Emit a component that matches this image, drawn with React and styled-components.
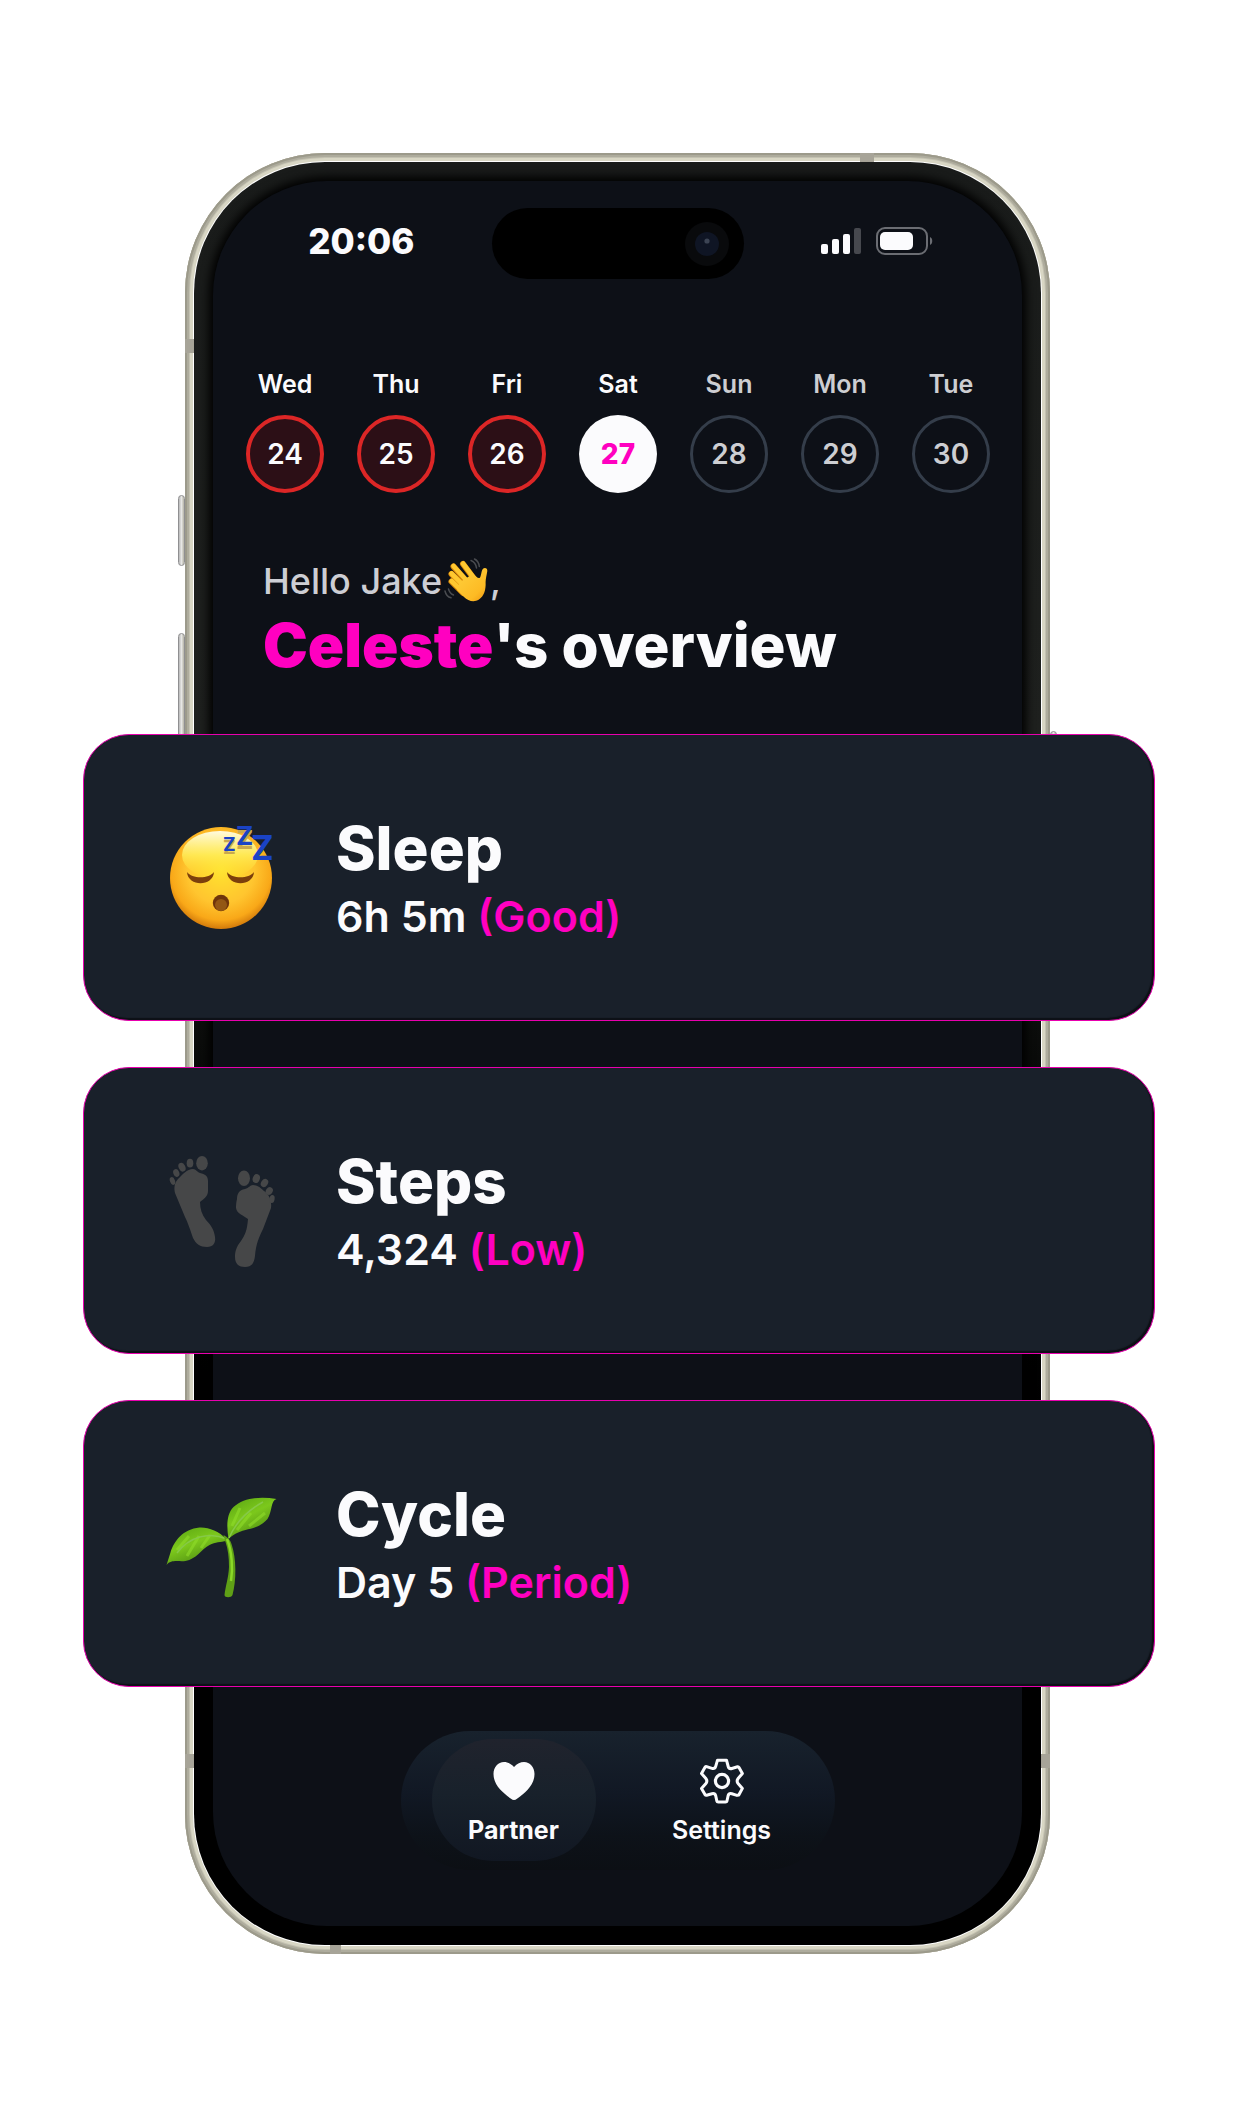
import React from 'react';
import styled, {createGlobalStyle, css} from 'styled-components';

const GlobalStyle = createGlobalStyle`
    *{
        box-sizing: border-box;
    }
    body{
        margin: 0;
        background-color: #ffffff;
        font-family: Inter, 'Liberation Sans', sans-serif;
        color: #fbfbfd;
    }
    button{
        padding: 0;
        border: 0;
        background: none;
        font: inherit;
        color: inherit;
        cursor: pointer;
    }
    h1, h2, p{
        margin: 0;
    }
    svg{
        display: block;
        flex: none;
        overflow: visible;
    }
`;

const Page = styled.main`
display: flex;
justify-content: center;
padding: 153px 19px 153px 20px;
`;

const Phone = styled.div`
position: relative;
width: 100%;
max-width: 865px;
padding: 9px;
border-radius: 140px;
background-color: #ffffff;
box-shadow:
    inset 0 0 0 2px #9c9a8b,
    inset 0 0 0 4px #aeac9d,
    inset 0 0 0 5px #c3c1b1,
    inset 0 0 0 8px #d8d6c4,
    inset 0 0 0 9px #ffffff;
`;

const Bezel = styled.div`
padding: 19px;
border-radius: 131px;
background: linear-gradient(#191b1a 0%, #1e201e 32%, #080908 52%, #000000 70%);
`;

const Screen = styled.div`
display: flex;
flex-direction: column;
padding: 27px 0 56px;
border-radius: 114px;
background-color: #0d1017;
box-shadow: 0 0 10px 4px #000000;
`;

const sides = {
    top: css`top: 0; left: 78%; width: 14px; height: 9px;`,
    leftTop: css`top: 186px; left: 0; width: 9px; height: 14px;`,
    leftBottom: css`bottom: 186px; left: 0; width: 9px; height: 14px;`,
    rightBottom: css`bottom: 186px; right: 0; width: 9px; height: 14px;`,
    bottom: css`bottom: 0; left: 145px; width: 11px; height: 9px;`,
};

const Antenna = styled.span`
position: absolute;
background-color: #a7a498;
${(props) => sides[props.$side]};
`;

const SideButton = styled.span`
position: absolute;
top: ${(props) => props.$top}px;
${(props) => props.$side}: -7px;
width: 7px;
height: ${(props) => props.$height}px;
border: 1px solid #8f8f91;
border-radius: 4px;
background: linear-gradient(to right, #b9b9ba, #e6e6e4 50%, #b4b2a6);
`;

/* status bar */
const StatusBar = styled.header`
display: grid;
grid-template-columns: 1fr 252px 1fr;
column-gap: 77px;
`;

const StatusSide = styled.div`
display: flex;
align-items: center;
gap: 15px;
height: 66px;
justify-content: ${(props) => props.$align};
`;

const Clock = styled.time`
font-size: 35px;
font-weight: 800;
line-height: 40px;
`;

const Island = styled.div`
display: flex;
align-items: center;
justify-content: flex-end;
height: 71px;
padding-right: 15px;
border-radius: 36px;
background-color: #000000;
`;

/* week */
const Week = styled.nav`
display: flex;
justify-content: flex-end;
align-items: flex-end;
gap: 33px;
margin-top: 90px;
padding-right: 32px;
overflow: hidden;
`;

const Day = styled.div`
display: flex;
flex: none;
flex-direction: column;
align-items: center;
gap: 16px;
width: 78px;
font-size: 25px;
font-weight: 600;
line-height: 30px;
color: ${(props) => props.$muted ? '#cdced2' : '#fbfbfd'};
`;

const dayTypes = {
    period: css`border: 4px solid #dc2626; background-color: #2c0f16;`,
    today: css`background-color: #fbfbfd; color: #ff00c0; font-weight: 800;`,
    future: css`border: 3px solid #343d4a;`,
};

const DayButton = styled.button`
&&{
    width: 78px;
    height: 78px;
    border-radius: 50%;
    font-size: 28px;
    ${(props) => dayTypes[props.$type]};
}
`;

/* greeting */
const Greeting = styled.section`
margin: 65px 50px 0;
`;

const Hello = styled.p`
display: flex;
align-items: center;
gap: 1px;
font-size: 36px;
font-weight: 500;
line-height: 46px;
color: #cdced4;
`;

const Title = styled.h1`
margin-top: 5px;
font-size: 60px;
font-weight: 800;
line-height: 72px;
white-space: nowrap;
`;

const Name = styled.span`
font-weight: 900;
color: #ff00c0;
`;

/* cards reach out over both edges of the phone */
const Cards = styled.section`
position: relative;
display: flex;
flex-direction: column;
gap: 46px;
margin: 53px -133px 0 -130px;
`;

const Card = styled.article`
display: flex;
align-items: center;
gap: 60px;
min-height: 287px;
padding: 40px 82px;
border: 1px solid #e800ae;
border-radius: 46px;
background-color: #19202a;
box-shadow: inset -2px -2px 1px #0d1016;
`;

const CardText = styled.div`
display: flex;
flex-direction: column;
gap: 6px;
`;

const CardTitle = styled.h2`
font-size: 60px;
font-weight: 800;
line-height: 70px;
`;

const CardValue = styled.p`
font-size: 43px;
font-weight: 600;
line-height: 54px;
`;

const Status = styled.span`
color: #ff00c0;
`;

/* tab bar */
const TabBar = styled.nav`
display: flex;
align-self: center;
gap: 44px;
margin-top: 44px;
padding: 8px 31px 9px;
border-radius: 70px;
background: linear-gradient(#18222d 0%, #111824 45%, #0d1219 75%, #0c0f14 100%);
`;

const Tab = styled.button`
&&{
    display: flex;
    flex-direction: column;
    align-items: center;
    gap: 13px;
    width: 164px;
    padding: 20px 0 17px;
    border-radius: 61px;
    background: ${(props) => props.$active ? 'linear-gradient(#20232d 0%, #18212b 45%, #111722 100%)' : 'none'};
    font-size: 25px;
    font-weight: ${(props) => props.$active ? 700 : 600};
    line-height: 28px;
}
`;

function Camera() {
    return (
        <svg width="44" height="44" viewBox="0 0 44 44">
            <circle cx="22" cy="22" r="22" fill="#090a0c" />
            <circle cx="22" cy="22" r="12" fill="#0f1524" />
            <circle cx="22" cy="19" r="2.6" fill="#3c4454" />
        </svg>
    );
}

function Signal() {
    return (
        <svg width="40" height="26" viewBox="0 0 40 26" fill="#fbfbfd">
            <rect x="0" y="16" width="7" height="10" rx="2" />
            <rect x="11" y="11" width="7" height="15" rx="2" />
            <rect x="22" y="6" width="7" height="20" rx="2" />
            <rect x="33" y="0" width="7" height="26" rx="2" fill="#46484e" />
        </svg>
    );
}

function Battery() {
    return (
        <svg width="58" height="28" viewBox="0 0 58 28">
            <rect x="1" y="1" width="50" height="26" rx="8" fill="none" stroke="#6b6d73" strokeWidth="2" />
            <rect x="4" y="5" width="33" height="18" rx="5" fill="#fbfbfd" />
            <path d="M54 10c3 1.200 3 6.800 0 8z" fill="#6b6d73" />
        </svg>
    );
}

function Wave() {
    return (
        <svg width="46" height="46" viewBox="0 0 46 46" fill="none" strokeLinecap="round">
            <defs>
                <linearGradient id="hand" x1="0" y1="0" x2="46" y2="46" gradientUnits="userSpaceOnUse">
                    <stop offset="0.3" stopColor="#ffcf3c" />
                    <stop offset="0.75" stopColor="#fdbb24" />
                    <stop offset="1" stopColor="#e88a0c" />
                </linearGradient>
            </defs>
            <path d="M10.500 8.500 24 24M20 6l12 16M8.500 16l13 14M8.500 23.500 20 35" stroke="#d88508" strokeWidth="6" />
            <path d="M10.500 8 24 23M20 5.500l12 16M8.500 15.500l13 13M8.500 23 20 34" stroke="#ffc830" strokeWidth="4.600" />
            <path d="M17 24 30 16c3 2 4.500 4.500 6.500 4 1.800-.600 1.500-7 3.500-9.200 1.800-1.800 4.600-.700 4.300 2.200-.500 4-1.600 7-1.700 11 .400 8-1.600 14-6.600 17.500-5 3.200-11 1.500-15-2.500l-7-7z" fill="url(#hand)" />
            <path d="M28 2.500c3 1 5 4 5.500 7.500M31.500 1c3 1.500 4.500 4.500 4.800 7.500M5.500 31c.800 3 2.500 5 5 6M2 33c.800 3.500 2.800 6 6 6.800" stroke="#4a4c50" strokeWidth="1.500" />
        </svg>
    );
}

function SleepIcon() {
    return (
        <svg width="110" height="110" viewBox="0 0 110 110">
            <defs>
                <radialGradient id="face" cx="0.5" cy="0.42" r="0.6">
                    <stop offset="0" stopColor="#ffe32f" />
                    <stop offset="0.55" stopColor="#ffc52f" />
                    <stop offset="0.82" stopColor="#f9a818" />
                    <stop offset="1" stopColor="#c96f08" />
                </radialGradient>
                <linearGradient id="shine" x1="0" y1="0" x2="0" y2="1">
                    <stop offset="0" stopColor="#fffbe0" />
                    <stop offset="0.5" stopColor="#fff05c" stopOpacity="0.8" />
                    <stop offset="1" stopColor="#ffe32f" stopOpacity="0" />
                </linearGradient>
            </defs>
            <circle cx="55" cy="55" r="51" fill="url(#face)" />
            <ellipse cx="54" cy="32" rx="38" ry="24" fill="url(#shine)" />
            <path d="M21 49c5 7 22 7 27 0-1 15-26 15-27 0zM61 49c5 7 22 7 27 0-1 15-26 15-27 0z" fill="#7c3f0c" />
            <circle cx="55" cy="80" r="8.200" fill="#6f350b" />
            <circle cx="55" cy="82" r="6" fill="#935714" />
            <g fontFamily="Inter, sans-serif" fontWeight="700" fill="#c9a94e">
                <text x="57" y="31" fontSize="19">Z</text>
                <text x="70" y="26" fontSize="26">Z</text>
            </g>
            <g fontFamily="Inter, sans-serif" fontWeight="700" fill="#1a43c6">
                <text x="57" y="28" fontSize="19">Z</text>
                <text x="70" y="22" fontSize="26">Z</text>
                <text x="85" y="37" fontSize="34">Z</text>
            </g>
        </svg>
    );
}

function StepsIcon() {
    return (
        <svg width="110" height="110" viewBox="0 0 110 110" fill="#464748">
            <path d="M27 13c3 0 4 3 7 4 5 1 8 3 8 8v10c0 5-4 8-8 11 0 7 2 13 6 18 5 5 8 10 9 17 1 6-2 10-8 10-7 0-11-3-14-9-3-9-5-15-8-21L9 37c-1-5-1-9 3-14 4-4 9-10 15-10z" />
            <ellipse cx="36" cy="7.200" rx="5.800" ry="7.200" />
            <ellipse cx="24" cy="7.200" rx="3.300" ry="4.400" />
            <ellipse cx="16" cy="11.200" rx="3.300" ry="4.600" transform="rotate(-25 16 11.200)" />
            <ellipse cx="10.300" cy="17" rx="3" ry="4" transform="rotate(-20 10.300 17)" />
            <ellipse cx="6.500" cy="25" rx="2.500" ry="4" transform="rotate(-20 6.500 25)" />
            <path d="M87 29c-3 0-4 3-8 4-6 1-8 5-8 10-1 4-1 7-1 9 1 6 7 7 12 11-1 12-3 16-7 22-5 6-6 11-6 16 0 7 4 10 10 10 7 0 9-4 10-11 1-12 4-19 8-27l8-21c1-7-2-14-7-17-3-3-7-6-11-6z" />
            <ellipse cx="78" cy="22.200" rx="6" ry="7.700" />
            <ellipse cx="90.300" cy="22.500" rx="3.500" ry="4.600" transform="rotate(20 90.300 22.500)" />
            <ellipse cx="98.500" cy="27" rx="3.300" ry="4.400" transform="rotate(35 98.500 27)" />
            <ellipse cx="103.300" cy="35" rx="3.300" ry="4" transform="rotate(35 103.300 35)" />
            <ellipse cx="106" cy="43" rx="2.600" ry="4" transform="rotate(10 106 43)" />
        </svg>
    );
}

function CycleIcon() {
    return (
        <svg width="110" height="110" viewBox="1 1 110 110" fill="none">
            <defs>
                <linearGradient id="leaf" x1="0" y1="0" x2="0.6" y2="1">
                    <stop offset="0" stopColor="#58a312" />
                    <stop offset="0.5" stopColor="#7cc81c" />
                    <stop offset="1" stopColor="#4c8a12" />
                </linearGradient>
            </defs>
            <path d="M63.500 51c-2-13-2-25 5-32 10-9 26-11 43-8-6 2-4 12-9 20-7 8-15 9-22 11-8 2-13 5-17 9z" fill="url(#leaf)" />
            <path d="M61.500 51c-8-8-18-12-27-11.500C18 41 9 53 5.500 64.500L1.500 77c5-6 12-3 19-4 11-2 15-11 24-16 6-3 11-3 17-4z" fill="url(#leaf)" />
            <path d="M67 38l8-18M72 42l14-17M84 38l16-13M12 62l12-14M22 68l12-20M36 60l9-13" stroke="#8fdc2a" strokeWidth="3" opacity="0.6" />
            <path d="M64 50c6-14 16-26 34-36M62 51c-18-8-38-2-50 14" stroke="#86c948" strokeWidth="1.500" />
            <path d="M58.500 47c4 2 7 5 8 9 5 14 5 37 1 51-1 3-8 3-8 0 1-9 4-17 4.500-28 0-10-1-18-3.500-25z" fill="#5fa016" />
            <path d="M62 51c5 12 6 30 4 42" stroke="#8ad827" strokeWidth="2.500" />
        </svg>
    );
}

function Heart() {
    return (
        <svg width="42" height="44" viewBox="0 0 42 44" fill="#fbfbfd">
            <path d="M21 8C18 4.500 14.500 3 11 3 5 3 .500 8 .500 15c0 11 9 18.500 17.500 24.800 2 1.600 4 1.600 6 0C32.500 33.500 41.500 26 41.500 15 41.500 8 37 3 31 3c-3.500 0-7 1.500-10 5z" />
        </svg>
    );
}

function Gear() {
    return (
        <svg width="44" height="44" viewBox="0 0 44 44" fill="none" stroke="#fbfbfd" strokeWidth="3" strokeLinejoin="round">
            <path d="M17.500 1.200h9l1.700 6.300q.800 2.700 3.700 2l5.600-1.700q1-.200 1.500.700l3.400 6-4.100 4.700q-2.300 2.800 0 5.600l4.100 4.600-3.600 6.600-1.800.400-5.200-1.700q-2.900-.700-3.700 2l-1.200 5.500q-.200.900-1.400.900h-7.200q-1.200 0-1.400-.900l-1.200-5.500q-.800-2.700-3.700-2l-5.400 1.600q-1 .200-1.600-.700l-3.500-6.100 4.200-4.700q2.300-2.800 0-5.600l-4.200-4.700 3.500-6.200q.600-.900 1.600-.700l5.400 1.800q2.900.700 3.700-2z" />
            <circle cx="22" cy="22" r="6.600" strokeWidth="3.200" />
        </svg>
    );
}

const days = [
    {name: 'Wed', date: 24, type: 'period'},
    {name: 'Thu', date: 25, type: 'period'},
    {name: 'Fri', date: 26, type: 'period'},
    {name: 'Sat', date: 27, type: 'today'},
    {name: 'Sun', date: 28, type: 'future'},
    {name: 'Mon', date: 29, type: 'future'},
    {name: 'Tue', date: 30, type: 'future'},
];

const cards = [
    {title: 'Sleep', value: '6h 5m', status: 'Good', icon: <SleepIcon />},
    {title: 'Steps', value: '4,324', status: 'Low', icon: <StepsIcon />},
    {title: 'Cycle', value: 'Day 5', status: 'Period', icon: <CycleIcon />},
];

function App() {
    return (
        <>
            <GlobalStyle />
            <Page>
                <Phone>
                    <SideButton $side="left" $top={342} $height={71} />
                    <SideButton $side="left" $top={480} $height={150} />
                    <SideButton $side="right" $top={578} $height={200} />
                    <Bezel>
                        <Screen>
                            <StatusBar>
                                <StatusSide $align="flex-end">
                                    <Clock>20:06</Clock>
                                </StatusSide>
                                <Island>
                                    <Camera />
                                </Island>
                                <StatusSide $align="flex-start">
                                    <Signal />
                                    <Battery />
                                </StatusSide>
                            </StatusBar>
                            <Week aria-label="Week">
                                {/* the previous day peeks in at the left edge */}
                                <Day>
                                    <DayButton $type="period" aria-label="Previous day" />
                                </Day>
                                {days.map((day) => (
                                    <Day key={day.date} $muted={day.type === 'future'}>
                                        <span>{day.name}</span>
                                        <DayButton $type={day.type}>{day.date}</DayButton>
                                    </Day>
                                ))}
                            </Week>
                            <Greeting>
                                <Hello>
                                    <span>Hello Jake</span>
                                    <Wave />
                                    <span>,</span>
                                </Hello>
                                <Title><Name>Celeste</Name>'s overview</Title>
                            </Greeting>
                            <Cards>
                                {cards.map((card) => (
                                    <Card key={card.title}>
                                        {card.icon}
                                        <CardText>
                                            <CardTitle>{card.title}</CardTitle>
                                            <CardValue>{card.value} <Status>({card.status})</Status></CardValue>
                                        </CardText>
                                    </Card>
                                ))}
                            </Cards>
                            <TabBar>
                                <Tab $active>
                                    <Heart />
                                    <span>Partner</span>
                                </Tab>
                                <Tab>
                                    <Gear />
                                    <span>Settings</span>
                                </Tab>
                            </TabBar>
                        </Screen>
                    </Bezel>
                    <Antenna $side="top" />
                    <Antenna $side="leftTop" />
                    <Antenna $side="leftBottom" />
                    <Antenna $side="rightBottom" />
                    <Antenna $side="bottom" />
                </Phone>
            </Page>
        </>
    );
}

export default App;
